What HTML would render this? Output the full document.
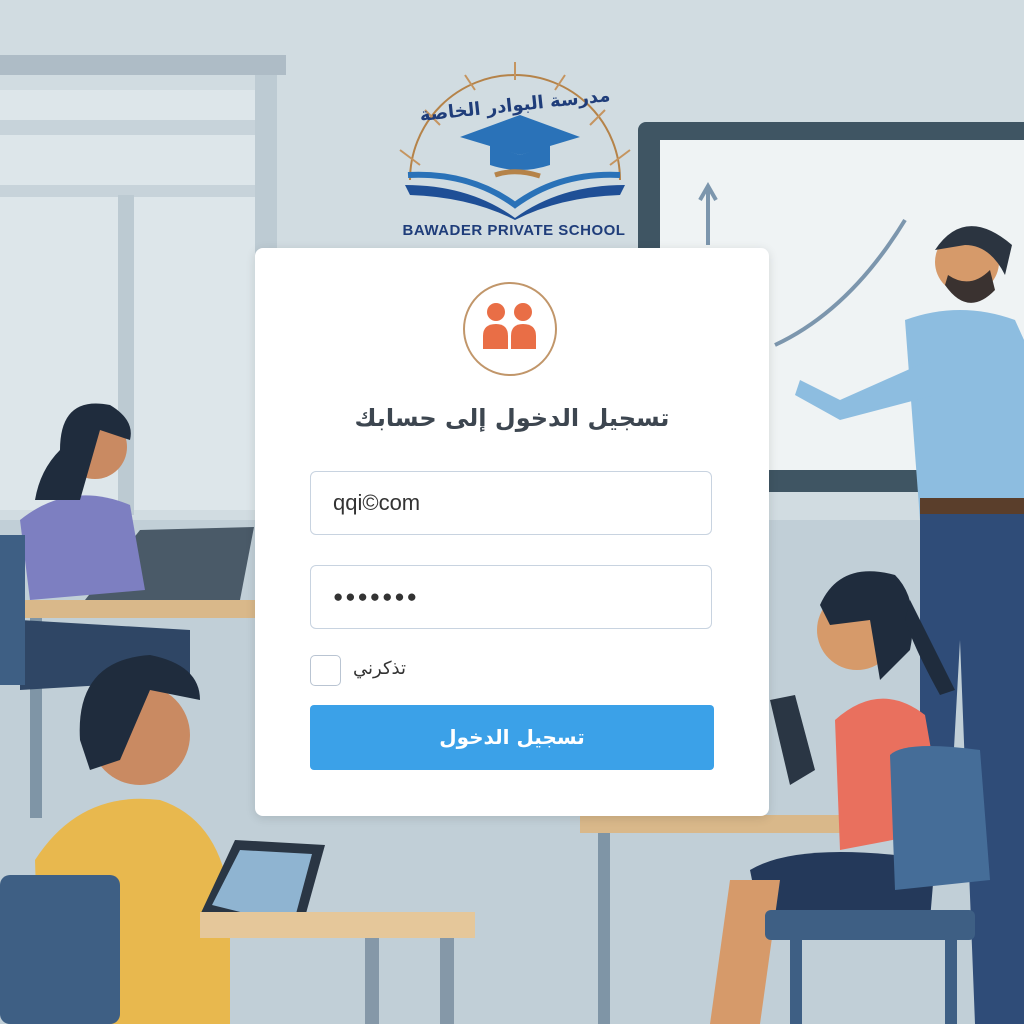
<!DOCTYPE html>
<html><head><meta charset="utf-8"><style>
body{margin:0;width:1024px;height:1024px;overflow:hidden;position:relative;font-family:"Liberation Sans","DejaVu Sans",sans-serif;background:#cbd7de}
svg.bg{position:absolute;left:0;top:0}
.card{position:absolute;left:255px;top:248px;width:514px;height:568px;background:#fff;border-radius:8px;box-shadow:0 2px 10px rgba(0,0,0,.12)}
.circ{position:absolute;left:208px;top:34px;width:94px;height:94px;border:2px solid #c1966a;border-radius:50%;box-sizing:border-box}
.title{position:absolute;left:0;right:0;top:156px;text-align:center;font:bold 24px "DejaVu Sans",sans-serif;color:#3d4650;direction:rtl}
.inp{position:absolute;left:55px;width:402px;height:64px;border:1.5px solid #c8d3e0;border-radius:6px;box-sizing:border-box;padding-left:22px;line-height:62px;font-size:22px;color:#333}
.chk{position:absolute;left:55px;top:407px;width:31px;height:31px;border:1.5px solid #b9c4d2;border-radius:5px;box-sizing:border-box}
.rem{position:absolute;left:98px;top:410px;font:18px "DejaVu Sans",sans-serif;color:#333}
.btn{position:absolute;left:55px;top:457px;width:404px;height:65px;background:#3ba1e8;border-radius:4px;color:#fff;text-align:center;font:bold 20px/65px "DejaVu Sans",sans-serif}
.logo{position:absolute;left:400px;top:222px;width:228px;text-align:center;font:bold 15px "Liberation Sans",sans-serif;color:#1f3d7a;letter-spacing:.5px}
.ar{position:absolute;left:415px;top:95px;width:200px;text-align:center;font:bold 18px "DejaVu Sans",sans-serif;color:#1f3d7a;transform:rotate(-6deg);white-space:nowrap}
</style></head><body>
<svg class="bg" width="1024" height="1024">
<rect width="1024" height="1024" fill="#c8d5dc"/>
<rect x="0" y="0" width="1024" height="520" fill="#d1dce1"/>
<rect x="0" y="520" width="1024" height="504" fill="#c1cfd7"/>
<rect x="0" y="55" width="286" height="20" fill="#aebcc6"/>
<rect x="0" y="90" width="255" height="420" fill="#dde6ea"/>
<rect x="0" y="120" width="255" height="15" fill="#c7d3da"/>
<rect x="0" y="185" width="255" height="12" fill="#c7d3da"/>
<rect x="118" y="195" width="16" height="320" fill="#bccad2"/>
<rect x="255" y="75" width="22" height="500" fill="#bdcbd3"/>
<rect x="638" y="122" width="400" height="370" rx="8" fill="#3f5563"/>
<rect x="660" y="140" width="370" height="330" fill="#eff3f4"/>
<path d="M775 345 Q850 310 905 220" stroke="#7c96ad" stroke-width="4" fill="none"/>
<path d="M708 245 V188 M700 200 L708 186 L716 200" stroke="#7c96ad" stroke-width="4" fill="none"/>
<path d="M905 320 Q960 300 1015 320 L1024 340 V520 L920 520 Z" fill="#8dbde0"/>
<path d="M930 360 L840 400 L800 380 L795 395 L840 420 L935 395 Z" fill="#8dbde0"/>
<circle cx="967" cy="262" r="32" fill="#d69a6a"/>
<path d="M935 250 Q965 205 1012 245 L1005 275 Q990 245 965 245 Z" fill="#2b3440"/>
<path d="M945 285 Q968 318 995 290 L990 270 Q970 290 948 275 Z" fill="#3a3230"/>
<rect x="920" y="498" width="104" height="16" fill="#5a3e2b"/>
<path d="M920 514 L1024 514 V1024 H975 L960 640 L950 820 H920 Z" fill="#2f4c78"/>
<rect x="6" y="600" width="250" height="18" fill="#d9b88a"/>
<rect x="30" y="618" width="12" height="200" fill="#7f95a6"/>
<path d="M85 600 L140 530 L254 527 L240 600 Z" fill="#4a5a68"/>
<path d="M20 520 Q70 480 130 505 L145 590 L30 600 Z" fill="#7d7fc1"/>
<circle cx="95" cy="447" r="32" fill="#c98a62"/>
<path d="M60 450 Q60 395 110 405 Q135 420 130 440 L100 430 L80 500 L35 500 Q40 470 60 450Z" fill="#1f2c3d"/>
<path d="M20 620 L190 630 L190 680 L20 690 Z" fill="#2f4665"/>
<rect x="0" y="535" width="25" height="150" fill="#3e5f84"/>
<path d="M35 860 Q80 790 160 800 Q220 820 230 900 L230 1024 H40 Z" fill="#e8b84e"/>
<circle cx="140" cy="735" r="50" fill="#c98a62"/>
<path d="M80 740 Q75 660 150 655 Q200 665 200 700 L150 690 L120 760 L90 770 Z" fill="#1f2c3d"/>
<rect x="0" y="875" width="120" height="149" rx="10" fill="#3e5f84"/>
<path d="M200 915 L235 840 L325 845 L300 935 Z" fill="#2a3644"/>
<path d="M212 905 L240 850 L312 854 L293 925 Z" fill="#8fb4d1"/>
<rect x="200" y="912" width="275" height="26" fill="#e5c79a"/>
<rect x="365" y="938" width="14" height="86" fill="#8598a8"/>
<rect x="440" y="938" width="14" height="86" fill="#8598a8"/>
<rect x="580" y="815" width="280" height="18" fill="#d9b88a"/>
<rect x="598" y="833" width="12" height="191" fill="#7f95a6"/>
<path d="M835 720 Q880 680 925 715 L945 830 L840 850 Z" fill="#e9705e"/>
<circle cx="857" cy="630" r="40" fill="#d69a6a"/>
<path d="M820 605 Q840 560 895 575 Q920 600 910 650 L880 680 L870 620 L830 625 Z" fill="#1f2c3d"/>
<path d="M910 600 Q930 640 955 690 L940 695 Q915 650 905 620Z" fill="#1f2c3d"/>
<path d="M770 700 L795 695 L815 770 L790 785 Z" fill="#2a3644"/>
<path d="M750 870 Q800 840 935 860 L930 920 L760 920 Z" fill="#24395a"/>
<path d="M710 1024 L730 880 L780 880 L760 1024Z" fill="#d69a6a"/>
<path d="M890 755 Q905 740 980 750 L990 880 L895 890 Z" fill="#456d98"/>
<rect x="765" y="910" width="210" height="30" rx="6" fill="#3e5f84"/>
<rect x="790" y="940" width="12" height="84" fill="#3e5f84"/>
<rect x="945" y="940" width="12" height="84" fill="#3e5f84"/>
<path d="M410 180 A105 105 0 0 1 620 180" stroke="#b58349" stroke-width="2" fill="none"/>
<path d="M420 165 L400 150 M440 125 L425 110 M475 90 L465 75 M515 80 V62 M555 90 L565 75 M590 125 L605 110 M610 165 L630 150" stroke="#c59560" stroke-width="2"/>
<path d="M460 137 L520 115 L580 137 L520 155 Z" fill="#2a72b8"/>
<path d="M490 145 V165 Q520 175 550 165 V145 L520 155 Z" fill="#2a72b8"/>
<path d="M405 185 Q470 185 515 218 Q560 185 625 185 L620 195 Q560 197 515 220 Q470 197 410 195 Z" fill="#1f4f96"/>
<path d="M408 175 Q470 172 515 205 Q560 172 620 175" stroke="#2a72b8" stroke-width="6" fill="none"/>
<path d="M495 175 Q515 168 540 176" stroke="#b58349" stroke-width="5" fill="none"/>
</svg>
<div class="ar">مدرسة البوادر الخاصة</div>
<div class="logo">BAWADER PRIVATE SCHOOL</div>
<div class="card">
  <div class="circ">
    <svg width="90" height="90" viewBox="0 0 90 90">
      <circle cx="31" cy="28" r="9" fill="#e96e46"/><circle cx="58" cy="28" r="9" fill="#e96e46"/>
      <path d="M18 65 V52 Q18 40 31 40 Q43 40 43 52 V65 Z" fill="#e96e46"/>
      <path d="M46 65 V52 Q46 40 58 40 Q71 40 71 52 V65 Z" fill="#e96e46"/>
    </svg>
  </div>
  <div class="title">تسجيل الدخول إلى حسابك</div>
  <div class="inp" style="top:223px">qqi©com</div>
  <div class="inp" style="top:317px;letter-spacing:2px;font-size:17px">●●●●●●●</div>
  <div class="chk"></div>
  <div class="rem">تذكرني</div>
  <div class="btn">تسجيل الدخول</div>
</div>
</body></html>
